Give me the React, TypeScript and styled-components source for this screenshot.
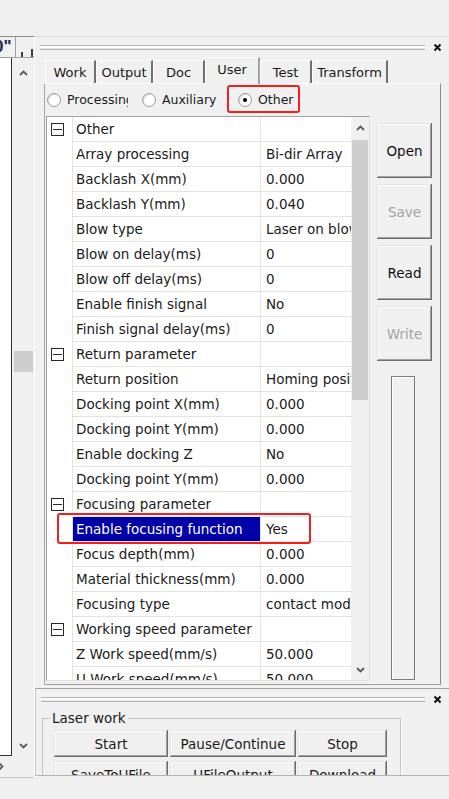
import React from "react";
import styled, { createGlobalStyle } from "styled-components";

// RDWorks style "User" parameter page: docked panel with tabs, property grid and laser work group

const GlobalStyle = createGlobalStyle`
  html, body {
    margin: 0;
    padding: 0;
    background: #f0f0f0;
  }
  body {
    font-family: "DejaVu Sans", "Liberation Sans", sans-serif;
  }
  * { box-sizing: border-box; }
`;

const Root = styled.div`
  position: relative;
  width: 449px;
  height: 799px;
  overflow: hidden;
  background: #f0f0f0;
  color: #1a1a1a;
  font-size: 13.5px;
`;

const TopGap = styled.div`
  height: 36px;
`;

const Main = styled.div`
  display: flex;
  height: 742px;
`;

/* ---------- left drawing pane ---------- */

const LeftPane = styled.div`
  width: 35px;
  display: flex;
  flex-direction: column;
  border-top: 1px solid #8c8c8c;
  border-bottom: 1px solid #c8c8c8;
  border-right: 1px solid #ffffff;
`;

const Ruler = styled.div`
  height: 21px;
  display: flex;
  border-bottom: 1px solid #a0a0a0;
  overflow: hidden;
`;

const RulerLabel = styled.div`
  width: 16px;
  border-right: 1px solid #a0a0a0;
  font-family: "Liberation Sans", sans-serif;
  font-size: 17px;
  font-weight: bold;
  color: #1f2a44;
  line-height: 20px;
  white-space: nowrap;
  overflow: hidden;
  text-indent: -6px;
`;

const RulerTicks = styled.div`
  flex: 1;
  display: flex;
  align-items: flex-end;
  padding-left: 5px;
  gap: 8px;
`;

const Tick = styled.div<{ $h: number }>`
  width: 2px;
  height: ${(p) => p.$h}px;
  background: #404040;
`;

const CanvasRow = styled.div`
  height: 698px;
  display: flex;
`;

const Canvas = styled.div`
  width: 12px;
  background: #ffffff;
  border-right: 1px solid #303030;
  border-bottom: 1px solid #303030;
`;

const VScroll = styled.div`
  flex: 1;
  display: flex;
  flex-direction: column;
  align-items: center;
`;

const ArrowCell = styled.div<{ $h: number }>`
  height: ${(p) => p.$h}px;
  display: flex;
  align-items: center;
  justify-content: center;
  flex-shrink: 0;
`;

const Track = styled.div`
  flex: 1;
  width: 100%;
  display: flex;
  flex-direction: column;
  align-items: center;
`;

const Thumb = styled.div<{ $top: number; $h: number; $w: number }>`
  margin-top: ${(p) => p.$top}px;
  width: ${(p) => p.$w}px;
  height: ${(p) => p.$h}px;
  background: #cdcdcd;
`;

const HScrollRow = styled.div`
  height: 21px;
  display: flex;
  align-items: center;
  margin-left: -4px;
`;

/* ---------- dock ---------- */

const Dock = styled.div`
  flex: 1;
  display: flex;
  flex-direction: column;
  border-top: 1px solid #dadada;
`;

const TopDock = styled.div`
  height: 651px;
  display: flex;
  flex-direction: column;
`;

const Grip = styled.div<{ $h: number }>`
  height: ${(p) => p.$h}px;
  display: flex;
  align-items: center;
  padding: 0 7px 0 5px;
  gap: 8px;
  flex-shrink: 0;
`;

const GripLines = styled.div`
  flex: 1;
  height: 5px;
  border-top: 1px solid #b4b4b4;
  border-bottom: 1px solid #b4b4b4;
  background: #ffffff;
  box-shadow: inset 0 -1px 0 #e6e6e6;
`;

const TabStrip = styled.div`
  height: 26px;
  display: flex;
  align-items: flex-end;
  padding-left: 10px;
  flex-shrink: 0;
`;

const Tab = styled.div<{ $w: number; $active?: boolean }>`
  width: ${(p) => p.$w}px;
  height: ${(p) => (p.$active ? 27 : 23)}px;
  margin-bottom: ${(p) => (p.$active ? -1 : 0)}px;
  display: flex;
  align-items: center;
  justify-content: center;
  padding-bottom: ${(p) => (p.$active ? 3 : 0)}px;
  background: #f0f0f0;
  border-top: 1px solid #ffffff;
  border-left: 1px solid #ffffff;
  border-right: 2px solid ${(p) => (p.$active ? "#a0a0a0" : "#707070")};
  position: relative;
  z-index: ${(p) => (p.$active ? 2 : 1)};
  white-space: nowrap;
  font-size: 13px;
`;

const TabBody = styled.div`
  margin-left: 9px;
  width: 397px;
  height: 602px;
  border-top: 1px solid #ffffff;
  border-left: 1px solid #a8a8a8;
  border-right: 1px solid #8c8c8c;
  border-bottom: 1px solid #a0a0a0;
  padding: 0 0 3px 1px;
  display: flex;
  flex-direction: column;
  flex-shrink: 0;
`;

const RadioRow = styled.div`
  height: 31px;
  display: flex;
  align-items: center;
  padding-left: 1px;
  gap: 14px;
  font-size: 12.5px;
`;

const RadioItem = styled.div<{ $w: number }>`
  width: ${(p) => p.$w}px;
  display: flex;
  align-items: center;
  gap: 6px;
  overflow: hidden;
  white-space: nowrap;
`;

const RadioDot = styled.span<{ $checked?: boolean }>`
  width: 14px;
  height: 14px;
  flex-shrink: 0;
  border-radius: 50%;
  background: #ffffff;
  border: 1px solid #9c9c9c;
  box-shadow: inset 1px 1px 0 #d8d8d8;
  display: flex;
  align-items: center;
  justify-content: center;
  &::after {
    content: "";
    width: 4px;
    height: 4px;
    border-radius: 50%;
    background: ${(p) => (p.$checked ? "#000" : "transparent")};
  }
`;

const ContentRow = styled.div`
  display: flex;
  gap: 7px;
  margin-top: 1px;
`;

const PropGrid = styled.div`
  width: 324px;
  height: 565px;
  display: flex;
  background: #ffffff;
  border: 1px solid #a0a0a0;
  border-right-color: #e3e3e3;
  border-bottom-color: #e3e3e3;
  overflow: hidden;
`;

const GridRows = styled.div`
  flex: 1;
  overflow: hidden;
`;

const GridRow = styled.div`
  height: 25px;
  display: flex;
`;

const Gutter = styled.div`
  width: 25px;
  flex-shrink: 0;
  display: flex;
  align-items: center;
  padding-left: 4px;
`;

const Collapse = styled.span`
  width: 13px;
  height: 13px;
  border: 1px solid #2a2a2a;
  display: flex;
  align-items: center;
  justify-content: center;
  &::after {
    content: "";
    width: 9px;
    height: 1px;
    background: #2a2a2a;
  }
`;

const NameCell = styled.div<{ $selected?: boolean }>`
  width: 188px;
  flex-shrink: 0;
  border-left: 1px solid #e3e3e3;
  border-bottom: 1px solid #e3e3e3;
  padding: 1px 0 0 3px;
  line-height: 23px;
  white-space: nowrap;
  overflow: hidden;
  background: ${(p) => (p.$selected ? "#0000a8" : "transparent")};
  color: ${(p) => (p.$selected ? "#ffffff" : "inherit")};
  background-clip: padding-box;
`;

const ValueCell = styled.div`
  flex: 1;
  min-width: 0;
  border-left: 1px solid #e3e3e3;
  border-bottom: 1px solid #e3e3e3;
  padding: 1px 0 0 5px;
  line-height: 23px;
  white-space: nowrap;
  overflow: hidden;
`;

const GridScroll = styled.div`
  width: 18px;
  flex-shrink: 0;
  background: #f0f0f0;
  display: flex;
  flex-direction: column;
  align-items: center;
`;

const SideColumn = styled.div`
  width: 55px;
  display: flex;
  flex-direction: column;
  padding-top: 7px;
`;

const SideButton = styled.div<{ $disabled?: boolean }>`
  height: 55px;
  margin-bottom: 6px;
  display: flex;
  align-items: center;
  justify-content: center;
  background: #f0f0f0;
  color: ${(p) => (p.$disabled ? "#a3a3a3" : "#101010")};
  box-shadow: inset -1px -1px 0 #6e6e6e, inset 1px 1px 0 #e3e3e3,
    inset -2px -2px 0 #a0a0a0, inset 2px 2px 0 #ffffff;
`;

const SunkenBar = styled.div`
  width: 24px;
  height: 304px;
  margin: 9px 0 0 14px;
  border: 1px solid #7e7e7e;
  box-shadow: inset 1px 1px 0 #ffffff;
`;

/* ---------- bottom dock ---------- */

const BottomDock = styled.div`
  height: 88px;
  border-top: 1px solid #a0a0a0;
  border-bottom: 1px solid #b4b4b4;
  border-left: 1px solid #c8c8c8;
  overflow: hidden;
`;

const GroupBox = styled.fieldset`
  margin: 1px 0 0 6px;
  width: 359px;
  padding: 4px 11px 10px 11px;
  border: 1px solid #c4c4c4;
  box-shadow: 1px 1px 0 #ffffff;
`;

const Legend = styled.legend`
  padding: 0 2px;
  margin-left: -4px;
  line-height: 16px;
`;

const ButtonGrid = styled.div`
  display: grid;
  grid-template-columns: 114px 126px 89px;
  column-gap: 2px;
  row-gap: 4px;
`;

const WorkButton = styled.div`
  height: 27px;
  display: flex;
  align-items: center;
  justify-content: center;
  background: #f0f0f0;
  white-space: nowrap;
  box-shadow: inset -1px -1px 0 #6e6e6e, inset 1px 1px 0 #e3e3e3,
    inset -2px -2px 0 #a0a0a0, inset 2px 2px 0 #ffffff;
`;

const RedMark = styled.div<{ $x: number; $y: number; $w: number; $h: number }>`
  position: absolute;
  left: ${(p) => p.$x}px;
  top: ${(p) => p.$y}px;
  width: ${(p) => p.$w}px;
  height: ${(p) => p.$h}px;
  border: 2px solid #f0201e;
  border-radius: 3px;
  pointer-events: none;
`;

const Chevron = ({ dir, size = 9 }: { dir: "up" | "down" | "right"; size?: number }) => {
  const pts =
    dir === "up" ? "1,6 4.5,2.5 8,6" : dir === "down" ? "1,3 4.5,6.5 8,3" : "3,1 6.5,4.5 3,8";
  return (
    <svg width={size} height={size} viewBox="0 0 9 9">
      <polyline points={pts} fill="none" stroke="#5a5a5a" strokeWidth="1.8" />
    </svg>
  );
};

const CloseX = () => (
  <svg width="9" height="9" viewBox="0 0 9 9">
    <path d="M1.5 1.5 L7.5 7.5 M7.5 1.5 L1.5 7.5" stroke="#111" strokeWidth="2" />
  </svg>
);

type Row = { name: string; value?: string; cat?: boolean; selected?: boolean };

const rows: Row[] = [
  { name: "Other", cat: true },
  { name: "Array processing", value: "Bi-dir Array" },
  { name: "Backlash X(mm)", value: "0.000" },
  { name: "Backlash Y(mm)", value: "0.040" },
  { name: "Blow type", value: "Laser on blow" },
  { name: "Blow on delay(ms)", value: "0" },
  { name: "Blow off delay(ms)", value: "0" },
  { name: "Enable finish signal", value: "No" },
  { name: "Finish signal delay(ms)", value: "0" },
  { name: "Return parameter", cat: true },
  { name: "Return position", value: "Homing position" },
  { name: "Docking point X(mm)", value: "0.000" },
  { name: "Docking point Y(mm)", value: "0.000" },
  { name: "Enable docking Z", value: "No" },
  { name: "Docking point Y(mm)", value: "0.000" },
  { name: "Focusing parameter", cat: true },
  { name: "Enable focusing function", value: "Yes", selected: true },
  { name: "Focus depth(mm)", value: "0.000" },
  { name: "Material thickness(mm)", value: "0.000" },
  { name: "Focusing type", value: "contact mode" },
  { name: "Working speed parameter", cat: true },
  { name: "Z Work speed(mm/s)", value: "50.000" },
  { name: "U Work speed(mm/s)", value: "50.000" },
];

const tabs = [
  { label: "Work", w: 51 },
  { label: "Output", w: 57 },
  { label: "Doc", w: 52 },
  { label: "User", w: 55, active: true },
  { label: "Test", w: 52 },
  { label: "Transform", w: 76 },
];

const workButtons = ["Start", "Pause/Continue", "Stop", "SaveToUFile", "UFileOutput", "Download"];

const App = (): JSX.Element => {
  return (
    <Root>
      <GlobalStyle />
      <TopGap />
      <Main>
        <LeftPane>
          <Ruler>
            <RulerLabel>0"</RulerLabel>
            <RulerTicks>
              <Tick $h={5} />
              <Tick $h={8} />
            </RulerTicks>
          </Ruler>
          <CanvasRow>
            <Canvas />
            <VScroll>
              <ArrowCell $h={30}>
                <Chevron dir="up" />
              </ArrowCell>
              <Track>
                <Thumb $top={263} $h={21} $w={19} />
              </Track>
              <ArrowCell $h={22}>
                <Chevron dir="down" />
              </ArrowCell>
            </VScroll>
          </CanvasRow>
          <HScrollRow>
            <Chevron dir="right" />
          </HScrollRow>
        </LeftPane>

        <Dock>
          <TopDock>
            <Grip $h={20}>
              <GripLines />
              <CloseX />
            </Grip>
            <TabStrip>
              {tabs.map((t) => (
                <Tab key={t.label} $w={t.w} $active={t.active}>
                  {t.label}
                </Tab>
              ))}
            </TabStrip>
            <TabBody>
              <RadioRow>
                <RadioItem $w={81}>
                  <RadioDot />
                  Processing
                </RadioItem>
                <RadioItem $w={82}>
                  <RadioDot />
                  Auxiliary
                </RadioItem>
                <RadioItem $w={60}>
                  <RadioDot $checked />
                  Other
                </RadioItem>
              </RadioRow>
              <ContentRow>
                <PropGrid>
                  <GridRows>
                    {rows.map((r, i) => (
                      <GridRow key={i}>
                        <Gutter>{r.cat && <Collapse />}</Gutter>
                        <NameCell $selected={r.selected}>{r.name}</NameCell>
                        <ValueCell>{r.value ?? ""}</ValueCell>
                      </GridRow>
                    ))}
                  </GridRows>
                  <GridScroll>
                    <ArrowCell $h={22}>
                      <Chevron dir="up" />
                    </ArrowCell>
                    <Track>
                      <Thumb $top={1} $h={260} $w={16} />
                    </Track>
                    <ArrowCell $h={22}>
                      <Chevron dir="down" />
                    </ArrowCell>
                  </GridScroll>
                </PropGrid>
                <SideColumn>
                  <SideButton>Open</SideButton>
                  <SideButton $disabled>Save</SideButton>
                  <SideButton>Read</SideButton>
                  <SideButton $disabled>Write</SideButton>
                  <SunkenBar />
                </SideColumn>
              </ContentRow>
            </TabBody>
          </TopDock>

          <BottomDock>
            <Grip $h={20}>
              <GripLines />
              <CloseX />
            </Grip>
            <GroupBox>
              <Legend>Laser work</Legend>
              <ButtonGrid>
                {workButtons.map((b) => (
                  <WorkButton key={b}>{b}</WorkButton>
                ))}
              </ButtonGrid>
            </GroupBox>
          </BottomDock>
        </Dock>
      </Main>

      <RedMark $x={227} $y={85} $w={73} $h={28} />
      <RedMark $x={57} $y={513} $w={254} $h={31} />
    </Root>
  );
};

export default App;
